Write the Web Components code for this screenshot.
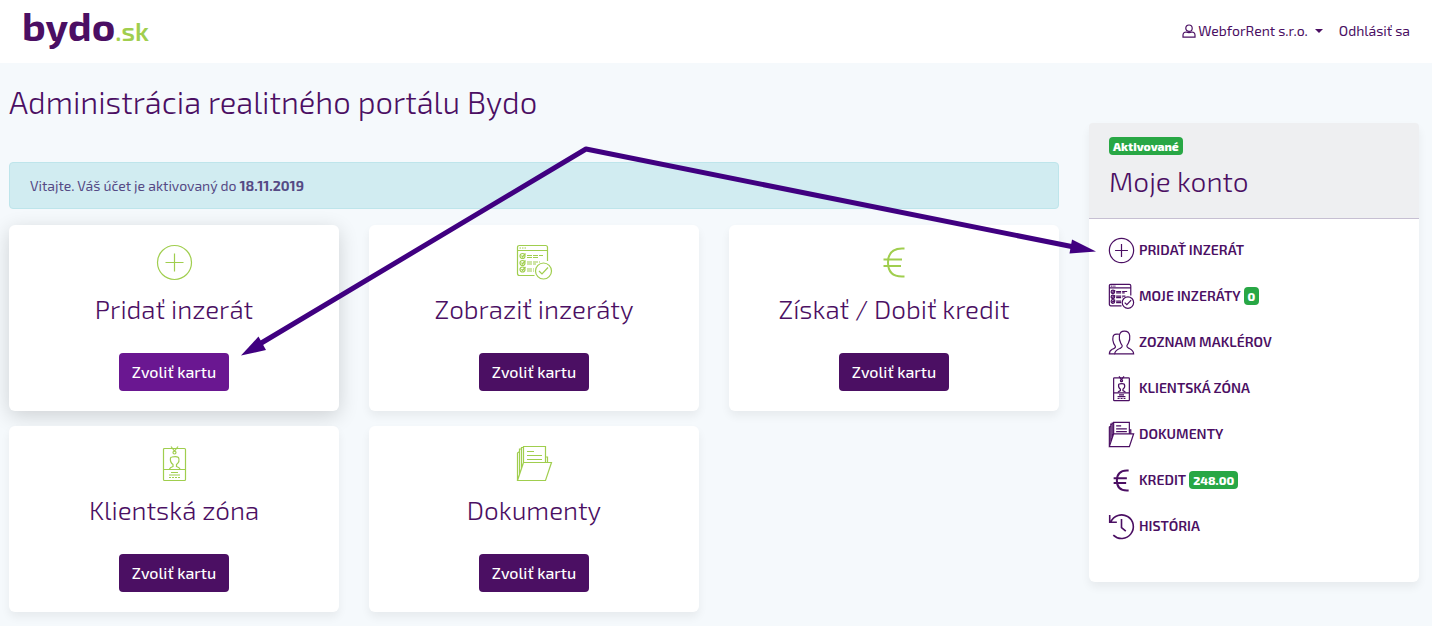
<!DOCTYPE html>
<html lang="sk">
<head>
<meta charset="utf-8">
<meta name="viewport" content="width=device-width, initial-scale=1">
<title>Bydo.sk - Administrácia</title>
<style>
  :root {
    --purple: #4b0f63;
    --purple-light: #6a1791;
    --green: #a0ce4e;
    --badge: #28a745;
  }
  body {
    margin: 0;
    min-height: 100vh;
    background: #f5f9fc;
    color: var(--purple);
    font-family: "Exo 2", Roboto, "Liberation Sans", sans-serif;
    font-size: 14px;
  }
</style>
</head>
<body>
<admin-page>
  <site-header slot="header" user="WebforRent s.r.o."></site-header>
  <h1 slot="title">Administrácia realitného portálu Bydo</h1>
  <info-alert slot="main">Vitajte. Váš účet je aktivovaný do <b>18.11.2019</b></info-alert>
  <action-card slot="main" icon="plus" active>Pridať inzerát</action-card>
  <action-card slot="main" icon="list">Zobraziť inzeráty</action-card>
  <action-card slot="main" icon="euro">Získať / Dobiť kredit</action-card>
  <action-card slot="main" icon="idcard">Klientská zóna</action-card>
  <action-card slot="main" icon="docs">Dokumenty</action-card>
  <account-panel slot="aside" status="Aktivované" heading="Moje konto">
    <menu-item icon="plus">Pridať inzerát</menu-item>
    <menu-item icon="list" badge="0">Moje inzeráty</menu-item>
    <menu-item icon="users">Zoznam maklérov</menu-item>
    <menu-item icon="idcard">Klientská zóna</menu-item>
    <menu-item icon="docs">Dokumenty</menu-item>
    <menu-item icon="euro" badge="248.00">Kredit</menu-item>
    <menu-item icon="history">História</menu-item>
  </account-panel>
</admin-page>
<guide-arrows></guide-arrows>

<script>
// every icon is drawn on a 35x35 grid
const ICONS = {
  plus: `<circle cx="17.5" cy="17.5" r="17"/><path d="M17.5 8.5v18M8.5 17.5h18"/>`,
  list: `<path d="M17.5 30.5H2.5q-2 0-2-2v-26q0-2 2-2h26q2 0 2 2V16M.5 5.5h30M2.5 3H4M5 3h1.5M7.5 3H9"/>
    <circle cx="5.5" cy="11" r="2.5"/><circle cx="5.5" cy="18" r="2.5"/><circle cx="5.5" cy="24.5" r="2.5"/>
    <path d="M4.5 10.5l1 1.5 3-3.5M4.5 17.5l1 1.5 3-3.5M4.5 24l1 1.5 3-3.5"/>
    <path d="M10 10.5h16M10 12.5h12M10 17h13M10 19h9M10 24h7M10 26h7" stroke-dasharray="5 1"/>
    <circle cx="26.5" cy="26" r="8"/><path d="M22 26l3 3 6-6.5"/>`,
  euro: `<path d="M27.5 3.5H25C15.5 3.5 11 9 11 17.5s4.5 14 14 14h2.5M6.5 14.5H25M6.5 21H24" stroke-width="2"/>`,
  idcard: `<rect x="6.5" y="2.5" width="22" height="32" rx="1"/><path d="M6.5 23.5h22M14 .5l3.500 4.500L21 .5"/>
    <circle cx="17.5" cy="6.5" r="1.5"/>
    <path d="M12.5 23q.5-1.500 3.500-2.500v-2c-2-1.500-3-4-2.500-6.500q.5-1 1.500-1 4.500-1 6.500.5c1 2.500 0 5.500-2 7v2q3 1 3.500 2.500M14 26.500h7M12 29h11"/>
    <path d="M12 31.5h11" stroke-dasharray="2 1"/>`,
  docs: `<path d="M6.5 16.5V.5h22v16M6.5 16.5h28l-6 18H.5l6-18M.5 34.5V7l2-1.500V28M2.5 5.500V3h2v19M4.5 3V1.500h2M28.5 11h2v5.500M10 5.500h7M10 9.500h15M10 13.500h15"/>`,
  users: `<path d="M8 33.5h26.500c0-4-2-5.500-6-7.500-2-1-3.500-1.500-3.500-3.500 0-1.500 1-2 2-4 2-3.500 2.500-7 2-10.500-.5-4.500-3-6.500-7.500-6.500S15 4 14.500 8c-.5 4 0 7 2 10.500 1 2 2 2.500 2 4 0 2-1.500 2.500-3.500 3.500-4.500 2-7 3.500-7 7.500z"/>
    <path d="M8 33.5H.5c0-3.500 1-5 4-6.500 3-1 4.500-2 4.500-3.500s-1.500-2.500-2.500-5c-1.500-3.500-1.500-6-1-8.500.5-4 4-5 9-4"/>`,
  history: `<path d="M6 29.5A16.5 16.5 0 1 0 2.5 11M1 1.5V11.5H11M17.5 7v12l6 5" stroke-width="1.6"/>`,
  user: `<circle cx="17.5" cy="10.5" r="8"/><path d="M2.5 33v-5q0-8 8-8 7 3 14 0 8 0 8 8v5z"/>`
};

class AppIcon extends HTMLElement {
  static get observedAttributes() {
    return ['name'];
  }

  constructor() {
    super();
    this.attachShadow({ mode: 'open' });
    this.shadowRoot.innerHTML = `
      <style>
        :host { display: inline-block; flex: none; width: 35px; height: 35px; }
        svg { display: block; width: 100%; height: 100%; overflow: visible; }
        svg * { vector-effect: non-scaling-stroke; }
      </style>
      <svg viewBox="0 0 35 35" fill="none" stroke="currentColor" stroke-width="1.2" aria-hidden="true"></svg>
    `;
  }

  attributeChangedCallback(attr, oldValue, value) {
    this.shadowRoot.querySelector('svg').innerHTML = ICONS[value] || '';
  }
}

class AdminPage extends HTMLElement {
  constructor() {
    super();
    this.attachShadow({ mode: 'open' });
    this.shadowRoot.innerHTML = `
      <style>
        :host { display: block; }
        .layout {
          display: grid;
          grid-template-columns: repeat(4, minmax(0, 1fr));
          column-gap: 30px;
          align-items: start;
          padding: 0 13px 14px 9px;
        }
        .content { grid-column: span 3; }
        .cards {
          display: grid;
          grid-template-columns: repeat(3, minmax(0, 1fr));
          gap: 15px 30px;
        }
        ::slotted(h1) {
          margin: 0;
          padding: 19px 0 40px;
          font-size: 31px;
          font-weight: 300;
          line-height: 40px;
        }
        aside { padding-top: 60px; }
        @media (max-width: 900px) {
          .layout, .cards { grid-template-columns: minmax(0, 1fr); }
          .content { grid-column: auto; }
        }
      </style>
      <slot name="header"></slot>
      <div class="layout">
        <main class="content">
          <slot name="title"></slot>
          <div class="cards"><slot name="main"></slot></div>
        </main>
        <aside><slot name="aside"></slot></aside>
      </div>
    `;
  }
}

class SiteHeader extends HTMLElement {
  constructor() {
    super();
    this.attachShadow({ mode: 'open' });
    this.shadowRoot.innerHTML = `
      <style>
        :host { display: block; background: white; }
        header {
          display: flex;
          align-items: center;
          justify-content: space-between;
          min-height: 63px;
          padding: 0 22px;
        }
        a { color: inherit; text-decoration: none; }
        .logo {
          padding-bottom: 13px;
          font-size: 40px;
          font-weight: 700;
          line-height: 50px;
        }
        .logo span {
          color: var(--green);
          font-size: 26px;
          font-weight: 600;
          line-height: 1;
        }
        nav { display: flex; align-items: center; gap: 16px; padding-bottom: 2px; }
        button {
          display: flex;
          align-items: center;
          padding: 0;
          border: 0;
          background: none;
          color: inherit;
          font: inherit;
          cursor: pointer;
        }
        app-icon { width: 14px; height: 14px; margin-right: 2px; }
        .caret {
          margin-left: 7px;
          border: 4px solid transparent;
          border-top-color: currentColor;
          border-bottom: 0;
        }
      </style>
      <header>
        <a class="logo" href="#">bydo<span>.sk</span></a>
        <nav>
          <button type="button"><app-icon name="user"></app-icon><span class="name"></span><i class="caret"></i></button>
          <a href="#">Odhlásiť sa</a>
        </nav>
      </header>
    `;
  }

  connectedCallback() {
    this.shadowRoot.querySelector('.name').textContent = this.getAttribute('user') || '';
  }
}

class InfoAlert extends HTMLElement {
  constructor() {
    super();
    this.attachShadow({ mode: 'open' });
    this.shadowRoot.innerHTML = `
      <style>
        :host {
          display: block;
          grid-column: 1 / -1;
          margin-bottom: 1px;
          padding: 12px 20px;
          border: 1px solid #bee5eb;
          border-radius: 4px;
          background: #d1ecf1;
          color: #554a85;
          line-height: 21px;
        }
      </style>
      <div role="alert"><slot></slot></div>
    `;
  }
}

class ActionCard extends HTMLElement {
  constructor() {
    super();
    this.attachShadow({ mode: 'open' });
    this.shadowRoot.innerHTML = `
      <style>
        :host {
          display: flex;
          flex-direction: column;
          align-items: center;
          padding: 20px;
          border-radius: 6px;
          background: white;
          box-shadow: 0 5px 10px rgba(0, 0, 0, 0.06);
          text-align: center;
        }
        :host([active]) { box-shadow: 0 5px 20px rgba(0, 0, 0, 0.16); }
        app-icon { color: var(--green); }
        h2 {
          margin: 13px 0 28px;
          font-size: 26px;
          font-weight: 300;
          line-height: 32px;
        }
        button {
          padding: 7px 13px;
          border: 0;
          border-radius: 4px;
          background: var(--purple);
          color: white;
          font-family: inherit;
          font-size: 16px;
          font-weight: 500;
          line-height: 24px;
          cursor: pointer;
        }
        :host([active]) button { background: var(--purple-light); }
      </style>
      <app-icon></app-icon>
      <h2><slot></slot></h2>
      <button type="button">Zvoliť kartu</button>
    `;
  }

  connectedCallback() {
    this.shadowRoot.querySelector('app-icon').setAttribute('name', this.getAttribute('icon') || '');
  }
}

class CountBadge extends HTMLElement {
  constructor() {
    super();
    this.attachShadow({ mode: 'open' });
    this.shadowRoot.innerHTML = `
      <style>
        :host {
          display: inline-block;
          padding: 0 4px;
          border-radius: 4px;
          background: var(--badge);
          color: white;
          font-size: 12px;
          font-weight: 800;
          line-height: 18px;
        }
      </style>
      <slot></slot>
    `;
  }
}

class AccountPanel extends HTMLElement {
  constructor() {
    super();
    this.attachShadow({ mode: 'open' });
    this.shadowRoot.innerHTML = `
      <style>
        :host {
          display: block;
          border-radius: 6px;
          background: white;
          box-shadow: 0 5px 10px rgba(0, 0, 0, 0.06);
        }
        header {
          display: flex;
          flex-direction: column;
          align-items: flex-start;
          gap: 8px;
          padding: 14px 20px 19px;
          border-bottom: 1px solid #c6bfd2;
          border-radius: 4px 4px 0 0;
          background: #eeeff1;
        }
        h2 {
          margin: 0;
          font-size: 28px;
          font-weight: 300;
          line-height: 36px;
        }
        nav { padding: 8px 20px 33px; }
      </style>
      <header>
        <count-badge></count-badge>
        <h2></h2>
      </header>
      <nav><slot></slot></nav>
    `;
  }

  connectedCallback() {
    this.shadowRoot.querySelector('count-badge').textContent = this.getAttribute('status') || '';
    this.shadowRoot.querySelector('h2').textContent = this.getAttribute('heading') || '';
  }
}

class MenuItem extends HTMLElement {
  constructor() {
    super();
    this.attachShadow({ mode: 'open' });
    this.shadowRoot.innerHTML = `
      <style>
        :host { display: block; }
        a {
          display: flex;
          align-items: center;
          min-height: 46px;
          color: inherit;
          font-weight: 600;
          text-decoration: none;
        }
        app-icon { width: 25px; height: 25px; margin-right: 5px; }
        .label { padding-bottom: 2px; text-transform: uppercase; }
        count-badge { margin-left: 3px; }
      </style>
      <a href="#"><app-icon></app-icon><span class="label"><slot></slot></span></a>
    `;
  }

  connectedCallback() {
    this.shadowRoot.querySelector('app-icon').setAttribute('name', this.getAttribute('icon') || '');
    if (this.hasAttribute('badge')) {
      const badge = document.createElement('count-badge');
      badge.textContent = this.getAttribute('badge');
      this.shadowRoot.querySelector('a').append(badge);
    }
  }
}

// two arrows from one point, over the page
class GuideArrows extends HTMLElement {
  constructor() {
    super();
    this.attachShadow({ mode: 'open' });
    this.shadowRoot.innerHTML = `
      <style>
        :host { position: absolute; top: 0; left: 0; pointer-events: none; }
        svg { display: block; }
      </style>
      <svg width="1100" height="360" fill="#400080" aria-hidden="true">
        <path d="M258 345L586 149L1074 247" fill="none" stroke="#400080" stroke-width="5" stroke-linejoin="round"/>
        <path d="M241 355.5L258.5 336.5L266 350z"/>
        <path d="M1096 251.5L1072 239.5L1069.5 253.5z"/>
      </svg>
    `;
  }
}

customElements.define('app-icon', AppIcon);
customElements.define('count-badge', CountBadge);
customElements.define('admin-page', AdminPage);
customElements.define('site-header', SiteHeader);
customElements.define('info-alert', InfoAlert);
customElements.define('action-card', ActionCard);
customElements.define('account-panel', AccountPanel);
customElements.define('menu-item', MenuItem);
customElements.define('guide-arrows', GuideArrows);
</script>
</body>
</html>
